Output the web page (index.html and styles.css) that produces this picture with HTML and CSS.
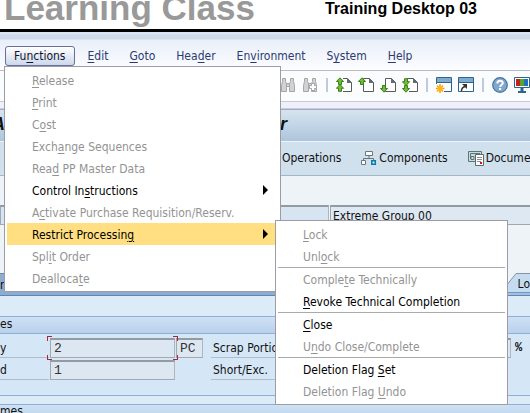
FILE: index.html
```
<!DOCTYPE html>
<html lang="en">
<head>
<meta charset="utf-8">
<title>Training Desktop 03</title>
<link rel="stylesheet" href="styles.css">
</head>
<body>
<header class="banner">
  <span class="brand">Learning Class</span>
  <span class="desktop-name">Training Desktop 03</span>
</header>

<nav class="menubar">
  <div class="menu-root">
    <button class="menu-button open" type="button">Fu<u>n</u>ctions</button>
    <ul class="menu">
      <li><button type="button" disabled><u>R</u>elease</button></li>
      <li><button type="button" disabled><u>P</u>rint</button></li>
      <li><button type="button" disabled>C<u>o</u>st</button></li>
      <li><button type="button" disabled>Exch<u>a</u>nge Sequences</button></li>
      <li><button type="button" disabled>Rea<u>d</u> PP Master Data</button></li>
      <li><button class="has-sub" type="button">Control In<u>s</u>tructions</button></li>
      <li><button type="button" disabled>A<u>c</u>tivate Purchase Requisition/Reserv.</button></li>
      <li class="sub-root">
        <button class="has-sub active" type="button">Restrict Processin<u>g</u></button>
        <ul class="menu submenu">
          <li><button type="button" disabled><u>L</u>ock</button></li>
          <li><button type="button" disabled>Unl<u>o</u>ck</button></li>
          <li class="split"><button type="button" disabled>Comple<u>t</u>e Technically</button></li>
          <li><button type="button"><u>R</u>evoke Technical Completion</button></li>
          <li class="split"><button type="button"><u>C</u>lose</button></li>
          <li><button type="button" disabled>U<u>n</u>do Close/Complete</button></li>
          <li class="split"><button type="button">Deletion Flag <u>S</u>et</button></li>
          <li><button type="button" disabled>Deletion Flag <u>U</u>ndo</button></li>
        </ul>
      </li>
      <li><button type="button" disabled>Spl<u>i</u>t Order</button></li>
      <li><button type="button" disabled>Dealloca<u>t</u>e</button></li>
    </ul>
  </div>
  <button class="menu-button" type="button"><u>E</u>dit</button>
  <button class="menu-button" type="button"><u>G</u>oto</button>
  <button class="menu-button" type="button">Hea<u>d</u>er</button>
  <button class="menu-button" type="button">En<u>v</u>ironment</button>
  <button class="menu-button" type="button">S<u>y</u>stem</button>
  <button class="menu-button" type="button"><u>H</u>elp</button>
</nav>

<svg class="defs" width="0" height="0" aria-hidden="true">
  <defs>
    <g id="binoculars" fill="#d2d2d2" stroke="#a6a6a6">
      <path d="M2.500 1.500h3v3l1 2v8h-5v-6l1-4zM10.500 1.500h3v3l1 4v6h-5v-8l1-2z"/>
      <path d="M6.500 6.500h3v3h-3z"/>
    </g>
    <path id="page" fill="#fff" stroke="#555b60" d="M5.500 1.500h6l4 4v9h-10z"/>
    <path id="fold" fill="#666b70" d="M11 1l5 5h-5z"/>
    <path id="up" fill="#6fbd36" stroke="#3b7f1d" d="M4 .8l3.600 3.700H5.500v3h-3v-3H.4z"/>
    <path id="down" fill="#6fbd36" stroke="#3b7f1d" d="M4 15.200l3.600-3.700H5.500v-3h-3v3H.4z"/>
  </defs>
</svg>

<div class="toolbar">
  <button type="button" aria-label="Find" disabled><svg viewBox="0 0 16 16"><use href="#binoculars"/></svg></button>
  <button type="button" aria-label="Find next" disabled><svg viewBox="0 0 16 16"><use href="#binoculars"/><path fill="#fff" stroke="#a6a6a6" d="M9.500 6.500h3v2h2v3h-2v2h-3v-2h-2v-3h2z"/></svg></button>
  <i class="divider"></i>
  <button type="button" aria-label="First page"><svg viewBox="0 0 16 16"><use href="#page"/><use href="#fold"/><path fill="#fff" d="M0 0h7v16H0z"/><use href="#up"/><path fill="#6fbd36" stroke="#3b7f1d" d="M4 7.500l3.600 3.800H5.500v3h-3v-3H.4z"/><path stroke="#555b60" d="M7 14.500h3"/></svg></button>
  <button type="button" aria-label="Previous page"><svg viewBox="0 0 16 16"><use href="#page"/><use href="#fold"/><use href="#up"/></svg></button>
  <button type="button" aria-label="Next page"><svg viewBox="0 0 16 16"><use href="#page"/><use href="#fold"/><use href="#down"/></svg></button>
  <button type="button" aria-label="Last page"><svg viewBox="0 0 16 16"><use href="#page"/><use href="#fold"/><path fill="#fff" d="M0 5h7v11H0z"/><use href="#down"/><path fill="#6fbd36" stroke="#3b7f1d" d="M4 8.500L.4 4.700h2.100v-3h3v3h2.100z"/></svg></button>
  <i class="divider"></i>
  <button type="button" aria-label="New session"><svg viewBox="0 0 16 16"><path fill="#fff" stroke="#2b6589" d="M.5.500h15v14H.500z"/><path fill="#82aacf" d="M1 1h14v4H1z"/><path stroke="#2b6589" d="M0 5.500h16"/><path fill="#fff" d="M0 7h8v9H0z"/><path stroke="#f5a100" stroke-width="1.500" d="M4 7v9M-.5 11.500h9M1 8.500l6 6M7 8.500l-6 6"/><circle cx="4" cy="11.500" r="2.500" fill="#ffb61c"/></svg></button>
  <button type="button" aria-label="Create shortcut"><svg viewBox="0 0 16 16"><path fill="#fff" stroke="#2b6589" d="M.5.500h15v14H.500z"/><path fill="#82aacf" d="M1 1h14v4H1z"/><path stroke="#2b6589" d="M0 5.500h16"/><path fill="none" stroke="#333" stroke-width="1.500" d="M3.500 14c0-3 1-4 4-4.500"/><path fill="#333" d="M4 7h5v5z"/></svg></button>
  <i class="divider"></i>
  <button type="button" aria-label="Help"><svg viewBox="0 0 16 16"><circle cx="8" cy="8" r="7.300" fill="#80a8ce" stroke="#41769f" stroke-width="1.200"/><path fill="none" stroke="#fff" stroke-width="2" d="M5.300 6.500c0-3.500 5.500-3.500 5.500-.5 0 1.800-2.600 1.800-2.600 4"/><path fill="#fff" d="M7 11h2.200v2H7z"/></svg></button>
  <button type="button" aria-label="Customize layout"><svg viewBox="0 0 16 16"><path fill="#fff" stroke="#2b6589" d="M.5.500h15v10H.500z"/><path fill="#c8201c" d="M2 2h4v7H2z"/><path fill="#55a82a" d="M6 2h4v7H6z"/><path fill="#246fc0" d="M10 2h4v7h-4z"/><path fill="#2b6589" d="M6.500 11h3v3H12v2H4v-2h2.500z"/></svg></button>
</div>

<h1 class="title"><span>A</span><span>r</span></h1>

<div class="app-toolbar">
  <button type="button">Operations</button>
  <button type="button"><svg viewBox="0 0 16 16"><path fill="#fff" stroke="#6c777d" d="M4.500 1.500h7v4h-7zM.5 10.500h4v4h-4z"/><path fill="none" stroke="#6c777d" d="M8 6v2M2.500 10V8.500h10V10"/><path fill="#d8f0fa" stroke="#087aa5" stroke-width="1.500" d="M10.800 10.800h3.500v3.500h-3.500z"/></svg>Components</button>
  <button type="button"><svg viewBox="0 0 16 16"><path fill="#c8dcd9" stroke="#5c7779" d="M.5 1.500h13v10H.500z"/><path fill="none" stroke="#5c7779" d="M2.500 9V3.500H12M3 6.500h3v3H3z"/><path fill="#fff" stroke="#62696d" d="M7.500 4.500h8v11h-8z"/><path stroke="#8a8f92" d="M9 7.500h5M9 9.500h5M9 11.500h4"/><path fill="#c71919" d="M12 12h2v2h-2z"/></svg>Docume</button>
</div>

<main>
  <div class="order-head">
    <input class="code" aria-label="Material" readonly>
    <input class="description" aria-label="Description" value="Extreme Group 00" readonly>
  </div>
  <div class="tabs">
    <button class="tab current" type="button">r.</button>
    <button class="tab sloped" type="button"><svg viewBox="0 0 12 19" preserveAspectRatio="none"><path fill="#c5dbf0" d="M0 13L10 .5H12V19H0z"/><path fill="none" stroke="#8793a4" d="M0 13L10 .5H12"/></svg><span>Lo</span></button>
  </div>
  <div class="panel">
    <section class="group">
      <h2>es</h2>
      <div class="row">
        <label class="name" for="total">y</label>
        <span class="focus"><input id="total" value="2"></span>
        <input class="unit" aria-label="Unit" value="PC" readonly>
        <label class="second" for="scrap">Scrap Portion</label>
        <input id="scrap" class="scrap">
        <span class="percent">%</span>
      </div>
      <div class="row">
        <label class="name" for="delivered">d</label>
        <input id="delivered" value="1" readonly>
        <span class="unit-gap"></span>
        <label class="second" for="short">Short/Exc.</label>
        <input id="short" class="short">
      </div>
    </section>
    <section class="group">
      <h2>mes</h2>
    </section>
  </div>
</main>
</body>
</html>
```
FILE: styles.css
```
* { box-sizing: border-box; }

body {
  margin: 0;
  height: 100vh;
  overflow: hidden;
  display: flex;
  flex-direction: column;
  background: #eef3f7;
  color: #111;
  font: 12px/16px "DejaVu Sans Condensed", "DejaVu Sans", sans-serif;
  font-stretch: condensed;
}

button, input { font: inherit; color: inherit; border: 0; background: none; padding: 0; margin: 0; border-radius: 0; min-width: 0; }
button { white-space: nowrap; text-align: left; }
u { text-underline-offset: 2px; text-decoration-thickness: 1px; }
.defs { position: absolute; }

.banner {
  flex: none;
  height: 32px;
  overflow: hidden;
  display: flex;
  gap: 70px;
  align-items: flex-end;
  padding: 0 6px 4px 4px;
  background: #fff;
  border-bottom: 3px solid #000;
  white-space: nowrap;
  font-family: "Liberation Sans", Arial, sans-serif;
  font-weight: bold;
}
.brand { color: #999; font-size: 35px; line-height: 34px; }
.desktop-name { color: #000; font-size: 16px; line-height: 32px; }

.menubar {
  flex: none;
  display: flex;
  height: 39px;
  padding: 14px 4px 0 5px;
  align-items: flex-start;
  gap: 1px;
  background: linear-gradient(#dbe4f2 0 2px, #ccdaec 3px 7px, #e9eff9 8px, #fcfdff);
  border-bottom: 1px solid #b9bcc4;
}
.menu-root { position: relative; z-index: 2; margin-right: 2px; }
.menu-button { height: 20px; padding: 0 10px; color: #2c3c70; }
.menu-button.open {
  display: block;
  padding: 0 8px;
  color: #10142c;
  border: 1px solid #686f98;
  border-radius: 3px;
  background: linear-gradient(#fff, #ccd8ec);
}

.menu {
  position: absolute;
  top: 100%;
  left: -1px;
  width: 277px;
  margin: 0;
  padding: 2px;
  list-style: none;
  background: #fff;
  border: 1px solid #9c9ca6;
}
.menu button { display: block; width: 100%; height: 22px; padding: 1px 0 0 25px; color: #000; }
.menu button:disabled { color: #939393; }
.has-sub { position: relative; }
.has-sub::after {
  content: "";
  position: absolute;
  right: 10px;
  top: 6px;
  border: 5px solid transparent;
  border-left-color: #000;
  border-right: 0;
}
.menu .active { background: #ffdf82; }
.sub-root { position: relative; }
.submenu { top: -3px; left: 268px; width: 233px; }
.split { border-top: 1px solid #aaa; }

.toolbar {
  flex: none;
  display: flex;
  height: 39px;
  gap: 6px;
  padding: 6px 0 0 280px;
  overflow: hidden;
  background: linear-gradient(#fbfcfe 0 30px, #cacbd0 30px 31px, #eef1fb 31px 37px, #a5a9bd 38px);
}
.toolbar button { flex: none; width: 16px; height: 16px; }
.toolbar svg, .app-toolbar svg { display: block; width: 16px; height: 16px; }
.divider { flex: none; width: 2px; height: 14px; margin: 1px 2px; background: #bdcbe0; }

.title {
  flex: none;
  display: flex;
  justify-content: space-between;
  width: 100%;
  height: 31px;
  margin: 0;
  padding: 0 calc(100% - 287px) 0 0;
  background: linear-gradient(#d7e4ef, #adc5dc);
  font: italic bold 18px/28px "Liberation Sans", Arial, sans-serif;
}
.title span:first-child { margin-left: -8px; }

.app-toolbar {
  flex: none;
  display: flex;
  gap: 20px;
  height: 35px;
  padding: 0 0 2px 282px;
  overflow: hidden;
  background: #d0e0ed;
  border-top: 1px solid #edf4fa;
  border-bottom: 1px solid #a2b8c8;
}
.app-toolbar button { display: flex; flex: none; align-items: center; gap: 2px; }

main { flex: 1; display: flex; flex-direction: column; min-height: 0; }
main input { height: 20px; padding-left: 3px; border: 1px solid #a0a8b0; border-top: 2px solid #929aa2; border-right-color: #aeb5bc; background: #e0eaf4; }
.order-head { flex: none; display: flex; gap: 1px; height: 49px; padding-top: 29px; border-bottom: 1px solid #b8c2cc; }
.order-head .code { width: 329px; background: #d7e4f1; }
.order-head .description { flex: 1; padding-left: 2px; border-right: 0; background: #dde8f3; }

.tabs {
  flex: none;
  display: flex;
  justify-content: space-between;
  align-items: flex-end;
  height: 71px;
  padding-top: 49px;
  background: linear-gradient(#eef3f7 67px, #7296c4 67px 68px, #a4c0e0 68px);
  border-bottom: 1px solid #5f86b8;
}
.tab { height: 22px; }
.tab.current { flex: 0 0 290px; background: #8eabd2; border-top: 1px solid #7289aa; }
.tab.sloped { display: flex; height: 19px; margin-bottom: 3px; line-height: 20px; }
.tab.sloped svg { width: 12px; height: 19px; }
.tab.sloped span { padding-right: 6px; background: #c5dbf0; border-top: 1px solid #8793a4; }
.tab.sloped { margin-right: -6px; }

.panel { flex: 1; display: flex; flex-direction: column; gap: 8px; padding-top: 20px; background: #dcebf8; }
.group { border-top: 1px solid #8eafd7; border-bottom: 1px solid #8eafd7; background: #d5e7f6; }
.group:first-child { height: 80px; }
.group:last-child { flex: 1; border-bottom: 0; }
.group h2 { height: 17px; margin: 0 0 4px; font-size: 12px; font-weight: normal; line-height: 15px; background: linear-gradient(#cfe1f3, #b9d1ec); border-bottom: 1px solid #8eafd7; }
.group:last-child h2 { margin: 0; line-height: 12px; }
.row { display: flex; gap: 1px; height: 22px; }
.row input { width: 125px; background: #dce7f2; font: 13px/16px "Liberation Mono", "Courier New", monospace; color: #333; }
.row .name { width: 49px; height: 20px; line-height: 20px; border-bottom: 1px solid #aebdca; }
.row .second { width: 85px; height: 20px; margin-left: 7px; padding-left: 2px; line-height: 20px; border-bottom: 1px solid #aebdca; white-space: nowrap; overflow: hidden; }
.row .unit { width: 27px; }
.unit-gap { width: 27px; }
.row .scrap { flex: 1; }
.row .short { flex: 1; visibility: hidden; }
.percent { flex: 0 0 18px; padding-left: 3px; font: bold 12px/20px "Liberation Mono", "Courier New", monospace; }
.focus { position: relative; z-index: 1; height: 20px; }
.focus::after {
  content: "";
  position: absolute;
  inset: -2px -3px;
  pointer-events: none;
  --h: linear-gradient(#a3283a, #a3283a);
  background:
    var(--h) 0 0 / 5px 1px, var(--h) 0 0 / 1px 5px,
    var(--h) 100% 0 / 5px 1px, var(--h) 100% 0 / 1px 5px,
    var(--h) 0 100% / 5px 1px, var(--h) 0 100% / 1px 5px,
    var(--h) 100% 100% / 5px 1px, var(--h) 100% 100% / 1px 5px;
  background-repeat: no-repeat;
}
```
